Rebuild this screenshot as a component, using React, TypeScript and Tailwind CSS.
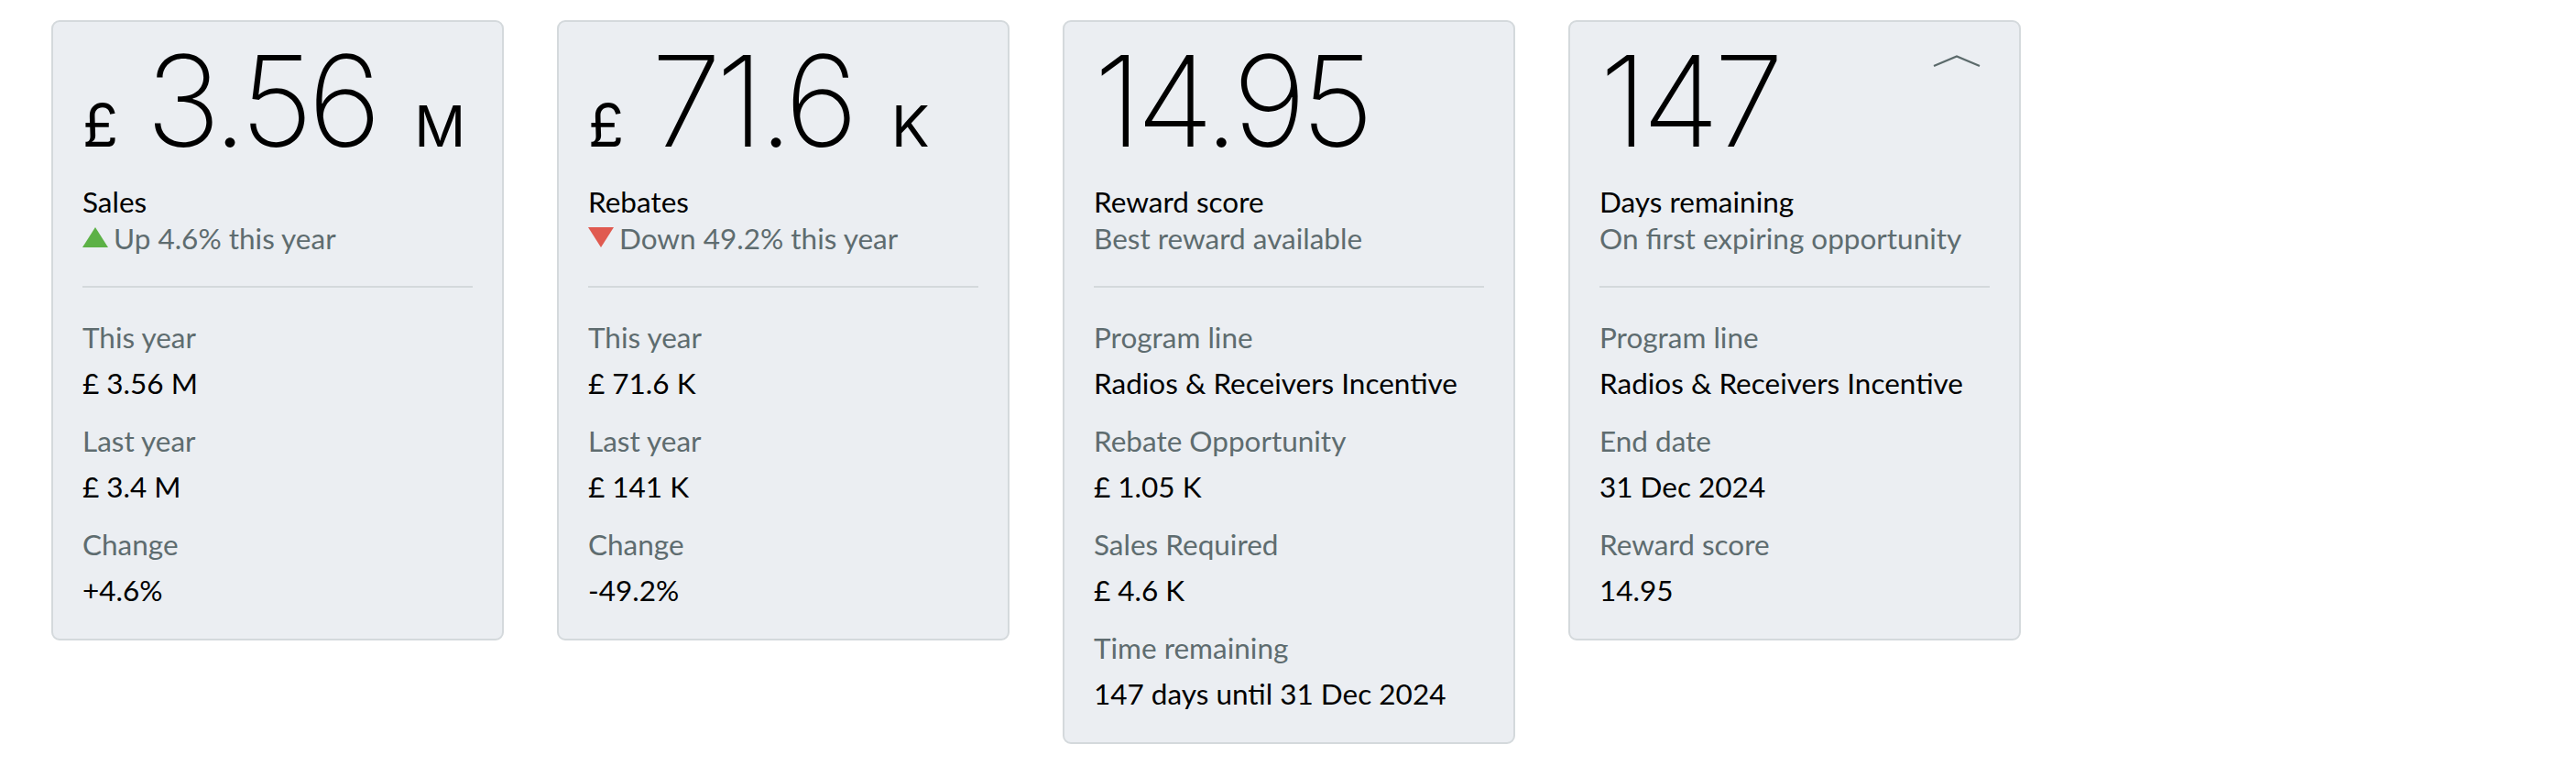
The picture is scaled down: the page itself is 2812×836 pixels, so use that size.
import React from "react";

type Row = { label: string; value: string };
type CardProps = {
  prefix?: string;
  big: string;
  suffix?: string;
  title: string;
  sub: string;
  trend?: "up" | "down";
  rows: Row[];
  chevron?: boolean;
};

const BODY = { fontFamily: "Lato, 'Open Sans', sans-serif" };
const THIN = { fontFamily: "Inter, Roboto, sans-serif" };

function Card({ prefix, big, suffix, title, sub, trend, rows, chevron }: CardProps) {
  return (
    <div
      className="w-[494px] shrink-0 rounded-[9px] border-2 border-[#d4d9dc] bg-[#ebeef2] px-[32px] pt-[17px] pb-[33px] text-[31.5px] leading-[40px] text-black"
      style={BODY}
    >
      <div className="flex items-start justify-between">
        <div className="flex items-baseline" style={THIN}>
          {prefix && <span className="mr-[30px] text-[64px] font-normal leading-none">{prefix}</span>}
          <span className="text-[138px] font-[170] leading-none tracking-[-6px]">{big}</span>
          {suffix && <span className="ml-[42px] text-[62px] font-normal leading-none">{suffix}</span>}
        </div>
        {chevron && (
          <svg className="mt-[19px] mr-[10px]" width="52" height="14" viewBox="0 0 52 14" fill="none">
            <path d="M1 12 L26 1.5 L51 12" stroke="#5b6a6b" strokeWidth="2.2" />
          </svg>
        )}
      </div>
      <div className="mt-[21px]">{title}</div>
      <div className="flex items-center text-[#5e6c6f]">
        {trend === "up" && (
          <svg className="mr-[6px] mb-[3px]" width="28" height="22" viewBox="0 0 28 22">
            <polygon points="14,0 28,22 0,22" fill="#5cb146" />
          </svg>
        )}
        {trend === "down" && (
          <svg className="mr-[6px] mb-[3px]" width="28" height="22" viewBox="0 0 28 22">
            <polygon points="0,0 28,0 14,22" fill="#e05a50" />
          </svg>
        )}
        <span>{sub}</span>
      </div>
      <div className="mt-[32px] mb-[34px] h-[2px] bg-[#d4d9dc]" />
      <div className="flex flex-col gap-[23px]">
        {rows.map((r) => (
          <div key={r.label} className="flex flex-col gap-[10px]">
            <div className="text-[#5e6c6f]">{r.label}</div>
            <div>{r.value}</div>
          </div>
        ))}
      </div>
    </div>
  );
}

export default function App() {
  return (
    <div className="min-h-[836px] w-[2812px] bg-white">
      <div className="flex items-start gap-[58px] pl-[56px] pt-[22px]">
        <Card
          prefix="£"
          big="3.56"
          suffix="M"
          title="Sales"
          sub="Up 4.6% this year"
          trend="up"
          rows={[
            { label: "This year", value: "£ 3.56 M" },
            { label: "Last year", value: "£ 3.4 M" },
            { label: "Change", value: "+4.6%" },
          ]}
        />
        <Card
          prefix="£"
          big="71.6"
          suffix="K"
          title="Rebates"
          sub="Down 49.2% this year"
          trend="down"
          rows={[
            { label: "This year", value: "£ 71.6 K" },
            { label: "Last year", value: "£ 141 K" },
            { label: "Change", value: "-49.2%" },
          ]}
        />
        <Card
          big="14.95"
          title="Reward score"
          sub="Best reward available"
          rows={[
            { label: "Program line", value: "Radios & Receivers Incentive" },
            { label: "Rebate Opportunity", value: "£ 1.05 K" },
            { label: "Sales Required", value: "£ 4.6 K" },
            { label: "Time remaining", value: "147 days until 31 Dec 2024" },
          ]}
        />
        <Card
          big="147"
          title="Days remaining"
          sub="On first expiring opportunity"
          chevron
          rows={[
            { label: "Program line", value: "Radios & Receivers Incentive" },
            { label: "End date", value: "31 Dec 2024" },
            { label: "Reward score", value: "14.95" },
          ]}
        />
      </div>
    </div>
  );
}
